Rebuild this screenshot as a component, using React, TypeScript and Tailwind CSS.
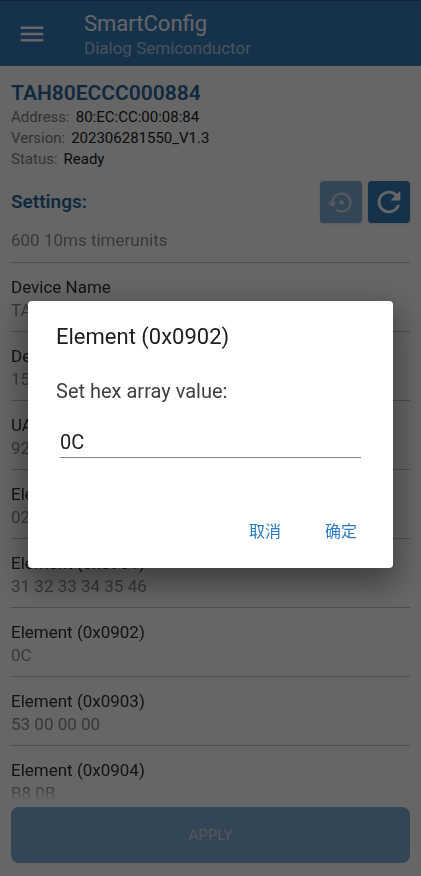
import React, { useState } from 'react';
import { MdMenu, MdRefresh, MdSettingsBackupRestore } from 'react-icons/md';

interface Setting {
  name?: string;
  value: string;
}

const SETTINGS: Setting[] = [
  { value: '600 10ms timerunits' },
  { name: 'Device Name', value: 'TAH80ECCC000884' },
  { name: 'Device Period', value: '1500' },
  { name: 'UART Baudrate', value: '9200' },
  { name: 'Element (0x0900)', value: '02' },
  { name: 'Element (0x0901)', value: '31 32 33 34 35 46' },
  { name: 'Element (0x0902)', value: '0C' },
  { name: 'Element (0x0903)', value: '53 00 00 00' },
  { name: 'Element (0x0904)', value: 'B8 0B' },
];

const INFO = [
  { label: 'Address', value: '80:EC:CC:00:08:84' },
  { label: 'Version', value: '202306281550_V1.3' },
  { label: 'Status', value: 'Ready' },
];

const SettingRow: React.FC<{ setting: Setting }> = ({ setting }) => (
  <li className={`flex shrink-0 flex-col border-b border-[#c0c0c0] ${setting.name ? 'h-[69px] pt-3' : 'h-10 pt-1.5'}`}>
    {setting.name && <span className="text-[17px] leading-6 text-[#303030]">{setting.name}</span>}
    <span className="text-[17px] leading-[22px] text-[#8c8c8c]">{setting.value}</span>
  </li>
);

const App: React.FC = () => {
  const [hexValue, setHexValue] = useState('0C');
  const [open, setOpen] = useState(true);

  return (
    <div className="relative flex h-screen flex-col overflow-hidden bg-white font-[Roboto,'Noto_Sans_CJK_SC',sans-serif]">
      <header className="flex h-[66px] shrink-0 items-center border-t border-[#2a5f90] bg-[#397dbc] pl-[17px] text-white">
        <button type="button" aria-label="Menu" className="mr-[37px]">
          <MdMenu size={30} />
        </button>
        <div className="pt-1">
          <h1 className="text-[22px] leading-6">SmartConfig</h1>
          <p className="text-[17px] leading-6 text-[#b4cbe0]">Dialog Semiconductor</p>
        </div>
      </header>

      <main className="flex min-h-0 flex-1 flex-col px-[11px] pb-[13px]">
        <section className="pt-[13px]">
          <h2 className="text-[21px] font-semibold leading-7 text-[#28689c]">TAH80ECCC000884</h2>
          <dl className="text-[15px] leading-[21px]">
            {INFO.map(({ label, value }) => (
              <div key={label} className="flex gap-1.5">
                <dt className="text-[#808080]">{label}:</dt>
                <dd className="text-[#202020]">{value}</dd>
              </div>
            ))}
          </dl>
        </section>

        <div className="flex items-center gap-1.5 pt-[11px]">
          <h3 className="flex-1 text-[19px] font-semibold text-[#28689c]">Settings:</h3>
          <button
            type="button"
            aria-label="Restore defaults"
            disabled
            className="flex size-[42px] items-center justify-center rounded bg-[#82acd4] text-[#d8e2ea] shadow"
          >
            <MdSettingsBackupRestore size={27} />
          </button>
          <button
            type="button"
            aria-label="Reload"
            className="flex size-[42px] items-center justify-center rounded bg-[#397dbc] text-white shadow"
          >
            <MdRefresh size={34} />
          </button>
        </div>

        <ul className="flex min-h-0 flex-1 flex-col overflow-hidden [mask-image:linear-gradient(to_top,transparent_2px,black_16px)]">
          {SETTINGS.map((s, i) => (
            <SettingRow key={i} setting={s} />
          ))}
        </ul>

        <button type="button" disabled className="mt-1 h-14 shrink-0 rounded-lg bg-[#82acd4] text-[15px] text-[#d0d8e0]">
          APPLY
        </button>
      </main>

      {open && (
        <div className="fixed inset-0 flex items-center justify-center bg-black/60 px-7 pb-[7px]">
          <form
            role="dialog"
            aria-labelledby="dialog-title"
            onSubmit={(e) => {
              e.preventDefault();
              setOpen(false);
            }}
            className="w-full max-w-lg rounded-sm bg-white px-7 pb-[18px] pt-5 shadow-[0_12px_32px_4px_rgba(0,0,0,0.4)]"
          >
            <h2 id="dialog-title" className="text-[22px] leading-8 text-[#202020]">
              Element (0x0902)
            </h2>
            <label htmlFor="hex-value" className="mt-6 block text-xl leading-7 text-[#404040]">
              Set hex array value:
            </label>
            <div className="px-1 pt-[21px]">
              <input
                id="hex-value"
                type="text"
                value={hexValue}
                onChange={(e) => setHexValue(e.target.value)}
                className="h-8 w-full border-b border-[#808080] text-xl text-[#202020] outline-none"
              />
            </div>
            <div className="-mr-2 mt-14 flex justify-end gap-3">
              <button type="button" onClick={() => setOpen(false)} className="h-9 w-16 text-base text-[#2a7cc8]">
                取消
              </button>
              <button type="submit" className="h-9 w-16 text-base text-[#2a7cc8]">
                确定
              </button>
            </div>
          </form>
        </div>
      )}
    </div>
  );
};

export default App;
